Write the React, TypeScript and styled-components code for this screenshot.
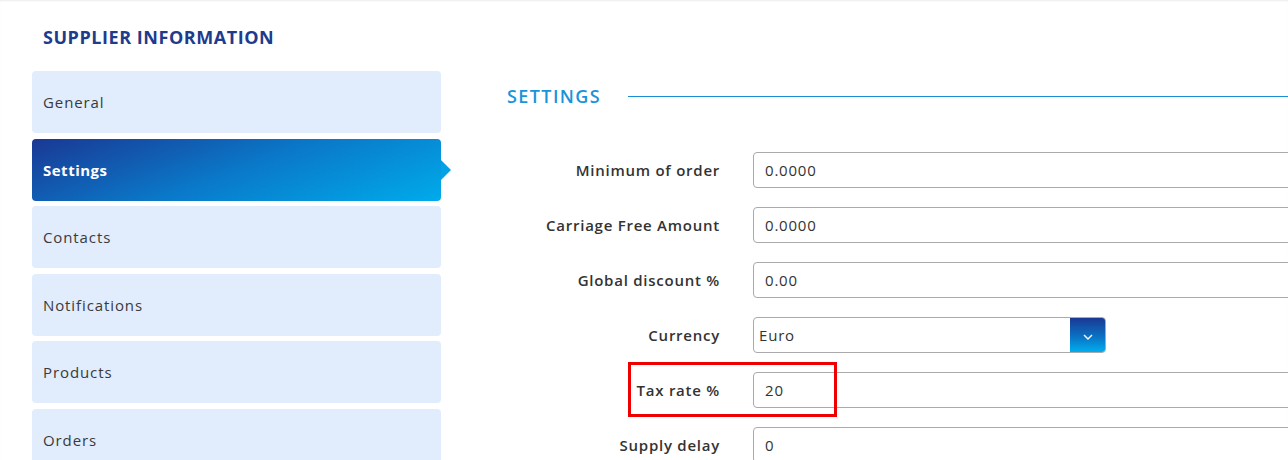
import styled, { createGlobalStyle } from "styled-components";

const GlobalStyle = createGlobalStyle`
  html, body {
    margin: 0;
    padding: 0;
    background: #ffffff;
    overflow: hidden;
  }
  body {
    font-family: "Open Sans", "Liberation Sans", sans-serif;
    color: #333333;
  }
`;

const navItems = [
  "General",
  "Settings",
  "Contacts",
  "Notifications",
  "Products",
  "Orders",
];

const fields = [
  { label: "Minimum of order", value: "0.0000" },
  { label: "Carriage Free Amount", value: "0.0000" },
  { label: "Global discount %", value: "0.00" },
  { label: "Currency", value: "Euro", select: true },
  { label: "Tax rate %", value: "20", highlight: true },
  { label: "Supply delay", value: "0" },
];

function App() {
  return (
    <>
      <GlobalStyle />
      <Page>
        <Title>SUPPLIER INFORMATION</Title>
        <Layout>
          <Nav>
            {navItems.map((item) => (
              <NavItem key={item} $active={item === "Settings"}>
                {item}
              </NavItem>
            ))}
          </Nav>
          <Content>
            <SectionHeader>
              <SectionTitle>SETTINGS</SectionTitle>
              <SectionLine />
            </SectionHeader>
            <Form>
              {fields.map((f) => (
                <Row key={f.label}>
                  <Label>{f.label}</Label>
                  {f.select ? (
                    <Select>
                      <SelectValue>{f.value}</SelectValue>
                      <SelectButton>
                        <svg width="10" height="6" viewBox="0 0 10 6">
                          <path
                            d="M1 1l4 4 4-4"
                            fill="none"
                            stroke="#ffffff"
                            strokeWidth="1.4"
                          />
                        </svg>
                      </SelectButton>
                    </Select>
                  ) : (
                    <Input readOnly value={f.value} />
                  )}
                  {f.highlight && <Highlight />}
                </Row>
              ))}
            </Form>
          </Content>
        </Layout>
      </Page>
    </>
  );
}

const Page = styled.div`
  min-height: 460px;
  padding: 0 0 0 32px;
  box-shadow: inset 0 2px 2px -1px #ececec;
`;

const Title = styled.h1`
  margin: 0;
  padding: 26px 0 0 11px;
  height: 71px;
  box-sizing: border-box;
  font-size: 18px;
  line-height: 22px;
  font-weight: 700;
  color: #1e3b8c;
  letter-spacing: 0.55px;
`;

const Layout = styled.div`
  display: flex;
  gap: 66px;
`;

const Nav = styled.div`
  display: flex;
  flex-direction: column;
  gap: 5.6px;
  width: 409px;
  flex-shrink: 0;
`;

const NavItem = styled.div<{ $active?: boolean }>`
  position: relative;
  height: 62px;
  display: flex;
  align-items: center;
  padding-left: 11px;
  border-radius: 4px;
  font-size: 15px;
  letter-spacing: ${(p) => (p.$active ? "0.5px" : "0.9px")};
  font-weight: ${(p) => (p.$active ? 700 : 400)};
  color: ${(p) => (p.$active ? "#ffffff" : "#3a3a3a")};
  background: ${(p) =>
    p.$active
      ? "linear-gradient(160deg, #1a3894 0%, #0a78c8 50%, #00abeb 100%)"
      : "#e1edfd"};

  &::after {
    content: "";
    display: ${(p) => (p.$active ? "block" : "none")};
    position: absolute;
    right: -10px;
    top: 50%;
    transform: translateY(-50%);
    border-top: 10px solid transparent;
    border-bottom: 10px solid transparent;
    border-left: 10px solid #04a2e4;
  }
`;

const Content = styled.div`
  flex: 1;
  min-width: 0;
  overflow: hidden;
`;

const SectionHeader = styled.div`
  display: flex;
  align-items: center;
  gap: 27px;
  margin-top: 14px;
  height: 22px;
`;

const SectionTitle = styled.h2`
  margin: 0;
  font-size: 18px;
  line-height: 22px;
  font-weight: 600;
  color: #1a93da;
  letter-spacing: 1.4px;
`;

const SectionLine = styled.div`
  flex: 1;
  height: 1px;
  background: #1a8fd6;
  margin-top: 1px;
`;

const Form = styled.div`
  display: flex;
  flex-direction: column;
  gap: 19px;
  margin-top: 45px;
  margin-right: -8px;
`;

const Row = styled.div`
  position: relative;
  display: flex;
  align-items: center;
  gap: 33px;
  height: 36px;
`;

const Label = styled.label`
  width: 213px;
  flex-shrink: 0;
  text-align: right;
  font-size: 15px;
  font-weight: 600;
  color: #333333;
  letter-spacing: 0.75px;
`;

const Input = styled.input`
  flex: 1;
  min-width: 0;
  height: 36px;
  box-sizing: border-box;
  border: 1px solid #aaaaaa;
  border-radius: 4px;
  padding: 0 11px;
  font-family: inherit;
  font-size: 15px;
  color: #333333;
  letter-spacing: 0.8px;
  outline: none;
`;

const Select = styled.div`
  flex-shrink: 0;
  width: 353px;
  height: 36px;
  box-sizing: border-box;
  border: 1px solid #aaaaaa;
  border-radius: 4px;
  display: flex;
  overflow: hidden;
`;

const SelectValue = styled.div`
  flex: 1;
  display: flex;
  align-items: center;
  padding-left: 5px;
  font-size: 15px;
  color: #333333;
  letter-spacing: 0.8px;
`;

const SelectButton = styled.div`
  width: 35px;
  display: flex;
  align-items: center;
  justify-content: center;
  padding-top: 4px;
  box-sizing: border-box;
  background: linear-gradient(180deg, #1a3894 0%, #0a72c4 55%, #00aeef 100%);
`;

const Highlight = styled.div`
  position: absolute;
  left: 121px;
  top: -10px;
  width: 209px;
  height: 55px;
  box-sizing: border-box;
  border: 3px solid #ee0000;
  pointer-events: none;
`;

export default App;
